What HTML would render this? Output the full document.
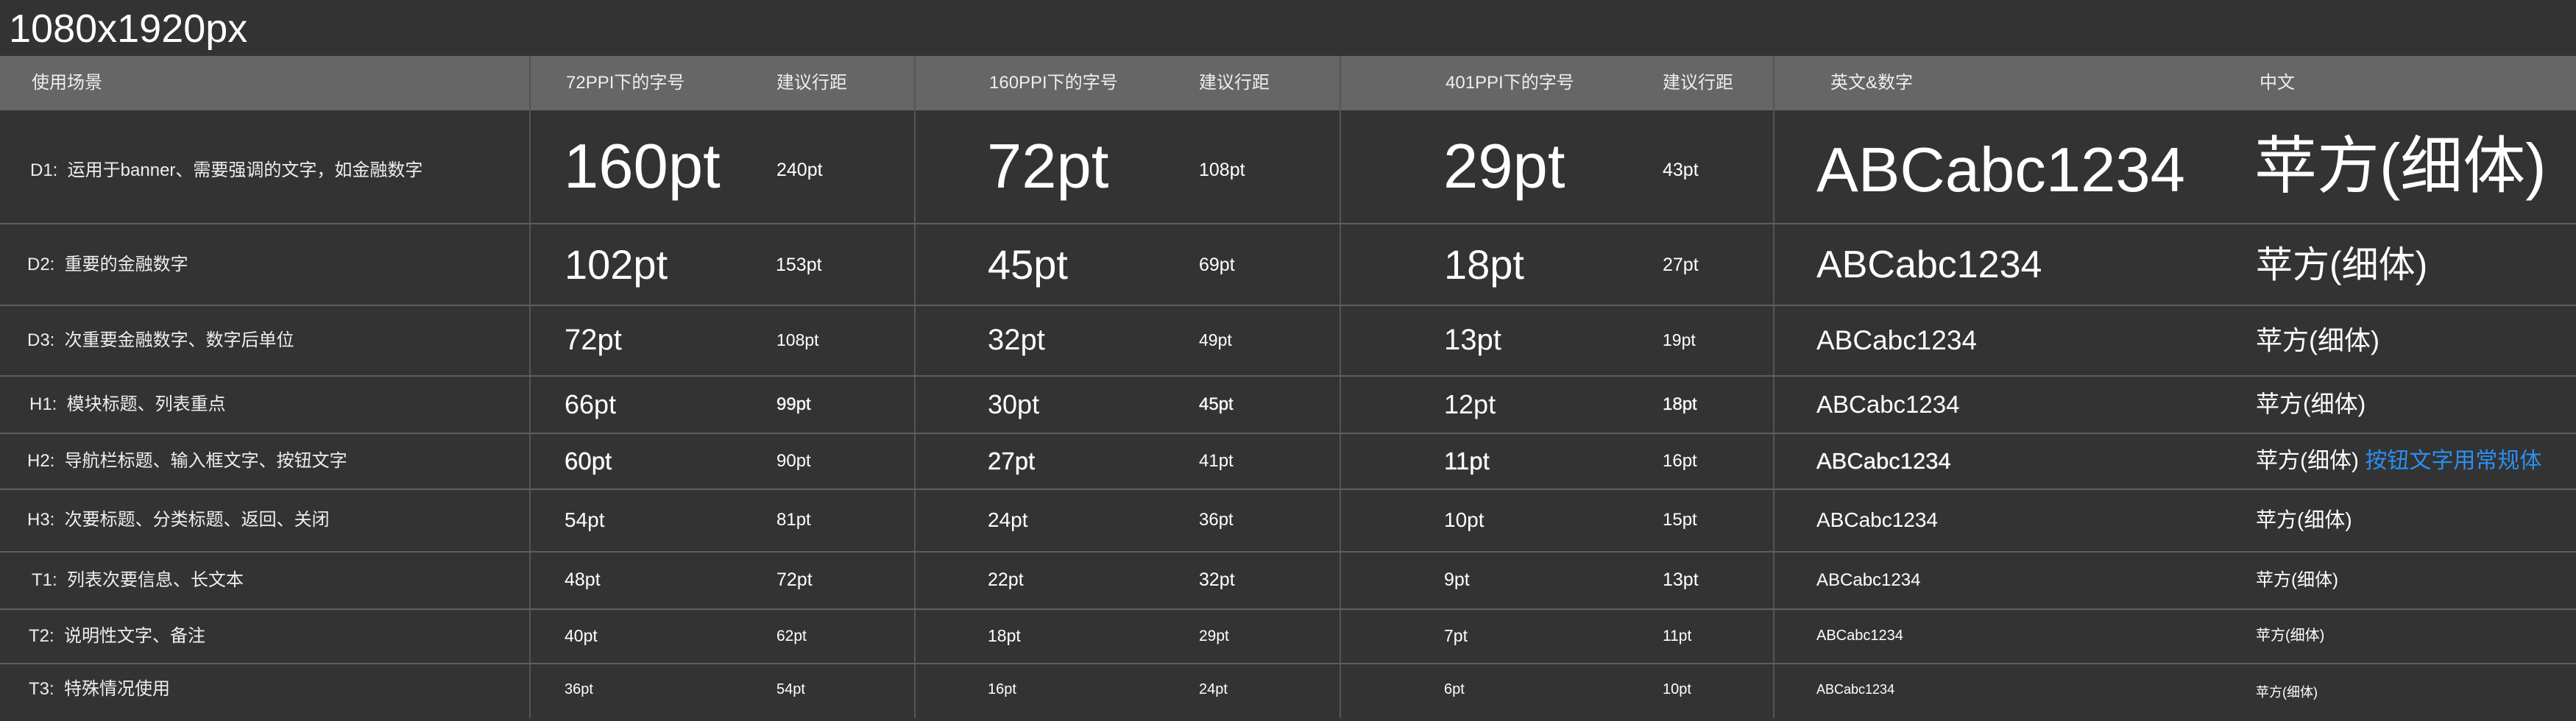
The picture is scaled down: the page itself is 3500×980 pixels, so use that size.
<!DOCTYPE html>
<html><head><meta charset="utf-8"><style>
*{margin:0;padding:0;box-sizing:border-box}
body{width:3500px;height:976px;background:#333;overflow:hidden;position:relative;font-family:"Liberation Sans","Noto Sans CJK SC",sans-serif;color:#fff}
.t{position:absolute;left:12px;top:4px;font-size:54px;line-height:70px;color:#fff}
.hd{position:absolute;left:0;top:76px;width:3500px;height:74px;background:#666}
.vl{position:absolute;top:76px;width:2px;height:900px;background:#555}
.hl{position:absolute;left:0;width:3500px;height:2px;background:#5f5f5f}
.r{position:absolute;left:0;width:3500px}
.r span{position:absolute;top:0;white-space:nowrap}
.lab{font-size:24px;color:#eee}
.m{text-shadow:0 0 1px #fff}
.blue{color:#2b8ff0}
</style></head><body>
<div class="t">1080x1920px</div>
<div class="hd"></div>
<div class="vl" style="left:719px"></div>
<div class="vl" style="left:1242px"></div>
<div class="vl" style="left:1820px"></div>
<div class="vl" style="left:2409px"></div>
<div class="hl" style="top:303px"></div>
<div class="hl" style="top:414px"></div>
<div class="hl" style="top:510px"></div>
<div class="hl" style="top:588px"></div>
<div class="hl" style="top:664px"></div>
<div class="hl" style="top:749px"></div>
<div class="hl" style="top:827px"></div>
<div class="hl" style="top:901px"></div>

<div class="r" style="top:76px;height:74px;line-height:74px;font-size:24px;color:#eee">
<span style="left:43px">使用场景</span><span style="left:769px">72PPI下的字号</span><span style="left:1055px">建议行距</span>
<span style="left:1344px">160PPI下的字号</span><span style="left:1629px">建议行距</span>
<span style="left:1964px">401PPI下的字号</span><span style="left:2259px">建议行距</span>
<span style="left:2487px">英文&amp;数字</span><span style="left:3070px">中文</span></div>

<div class="r" style="top:150px;height:153px;line-height:163px">
<span class="lab" style="left:41px">D1:&nbsp; 运用于banner、需要强调的文字，如金融数字</span>
<span style="left:766px;font-size:85px;line-height:153px">160pt</span><span style="left:1055px;font-size:25px">240pt</span>
<span style="left:1341px;font-size:85px;line-height:153px">72pt</span><span style="left:1629px;font-size:25px">108pt</span>
<span style="left:1961px;font-size:85px;line-height:153px">29pt</span><span style="left:2259px;font-size:25px">43pt</span>
<span style="left:2468px;font-size:85px;line-height:163px">ABCabc1234</span><span style="left:3063px;font-size:85px;line-height:153px">苹方(细体)</span></div>

<div class="r" style="top:304px;height:110px;line-height:112px">
<span class="lab" style="left:37px">D2:&nbsp; 重要的金融数字</span>
<span style="left:767px;font-size:56px">102pt</span><span style="left:1054px;font-size:25px">153pt</span>
<span style="left:1342px;font-size:56px">45pt</span><span style="left:1629px;font-size:25px">69pt</span>
<span style="left:1962px;font-size:56px">18pt</span><span style="left:2259px;font-size:25px">27pt</span>
<span style="left:2468px;font-size:52px">ABCabc1234</span><span style="left:3065px;font-size:50px">苹方(细体)</span></div>

<div class="r" style="top:415px;height:95px;line-height:95px">
<span class="lab" style="left:37px">D3:&nbsp; 次重要金融数字、数字后单位</span>
<span style="left:767px;font-size:40px">72pt</span><span style="left:1055px;font-size:23px">108pt</span>
<span style="left:1342px;font-size:40px">32pt</span><span style="left:1629px;font-size:23px">49pt</span>
<span style="left:1962px;font-size:40px">13pt</span><span style="left:2259px;font-size:23px">19pt</span>
<span style="left:2468px;font-size:37px">ABCabc1234</span><span style="left:3065px;font-size:36px">苹方(细体)</span></div>

<div class="r" style="top:511px;height:77px;line-height:77px">
<span class="lab" style="left:40px">H1:&nbsp; 模块标题、列表重点</span>
<span style="left:767px;font-size:36px">66pt</span><span class="m" style="left:1055px;font-size:24px">99pt</span>
<span style="left:1342px;font-size:36px">30pt</span><span class="m" style="left:1629px;font-size:24px">45pt</span>
<span style="left:1962px;font-size:36px">12pt</span><span class="m" style="left:2259px;font-size:24px">18pt</span>
<span style="left:2468px;font-size:33px">ABCabc1234</span><span style="left:3065px;font-size:32px">苹方(细体)</span></div>

<div class="r" style="top:589px;height:75px;line-height:75px">
<span class="lab" style="left:37px">H2:&nbsp; 导航栏标题、输入框文字、按钮文字</span>
<span class="m" style="left:767px;font-size:33px">60pt</span><span style="left:1055px;font-size:24px">90pt</span>
<span class="m" style="left:1342px;font-size:33px">27pt</span><span style="left:1629px;font-size:24px">41pt</span>
<span class="m" style="left:1962px;font-size:33px">11pt</span><span style="left:2259px;font-size:24px">16pt</span>
<span class="m" style="left:2468px;font-size:31px">ABCabc1234</span><span style="left:3065px;font-size:30px">苹方(细体) <span class="blue" style="position:static">按钮文字用常规体</span></span></div>

<div class="r" style="top:665px;height:84px;line-height:84px">
<span class="lab" style="left:37px">H3:&nbsp; 次要标题、分类标题、返回、关闭</span>
<span style="left:767px;font-size:28px">54pt</span><span style="left:1055px;font-size:24px">81pt</span>
<span style="left:1342px;font-size:28px">24pt</span><span style="left:1629px;font-size:24px">36pt</span>
<span style="left:1962px;font-size:28px">10pt</span><span style="left:2259px;font-size:24px">15pt</span>
<span style="left:2468px;font-size:28px">ABCabc1234</span><span style="left:3065px;font-size:28px">苹方(细体)</span></div>

<div class="r" style="top:750px;height:77px;line-height:77px">
<span class="lab" style="left:43px">T1:&nbsp; 列表次要信息、长文本</span>
<span style="left:767px;font-size:25px">48pt</span><span style="left:1055px;font-size:25px">72pt</span>
<span style="left:1342px;font-size:25px">22pt</span><span style="left:1629px;font-size:25px">32pt</span>
<span style="left:1962px;font-size:25px">9pt</span><span style="left:2259px;font-size:25px">13pt</span>
<span style="left:2468px;font-size:24px">ABCabc1234</span><span style="left:3065px;font-size:24px">苹方(细体)</span></div>

<div class="r" style="top:828px;height:73px;line-height:73px">
<span class="lab" style="left:39px">T2:&nbsp; 说明性文字、备注</span>
<span style="left:767px;font-size:23px">40pt</span><span style="left:1055px;font-size:21px">62pt</span>
<span style="left:1342px;font-size:23px">18pt</span><span style="left:1629px;font-size:21px">29pt</span>
<span style="left:1962px;font-size:23px">7pt</span><span style="left:2259px;font-size:21px">11pt</span>
<span style="left:2468px;font-size:20px">ABCabc1234</span><span style="left:3065px;font-size:20px">苹方(细体)</span></div>

<div class="r" style="top:902px;height:74px;line-height:70px">
<span class="lab" style="left:39px">T3:&nbsp; 特殊情况使用</span>
<span style="left:767px;font-size:20px">36pt</span><span style="left:1055px;font-size:20px">54pt</span>
<span style="left:1342px;font-size:20px">16pt</span><span style="left:1629px;font-size:20px">24pt</span>
<span style="left:1962px;font-size:20px">6pt</span><span style="left:2259px;font-size:20px">10pt</span>
<span style="left:2468px;font-size:18px">ABCabc1234</span><span style="left:3065px;font-size:18px;line-height:78px">苹方(细体)</span></div>
</body></html>
